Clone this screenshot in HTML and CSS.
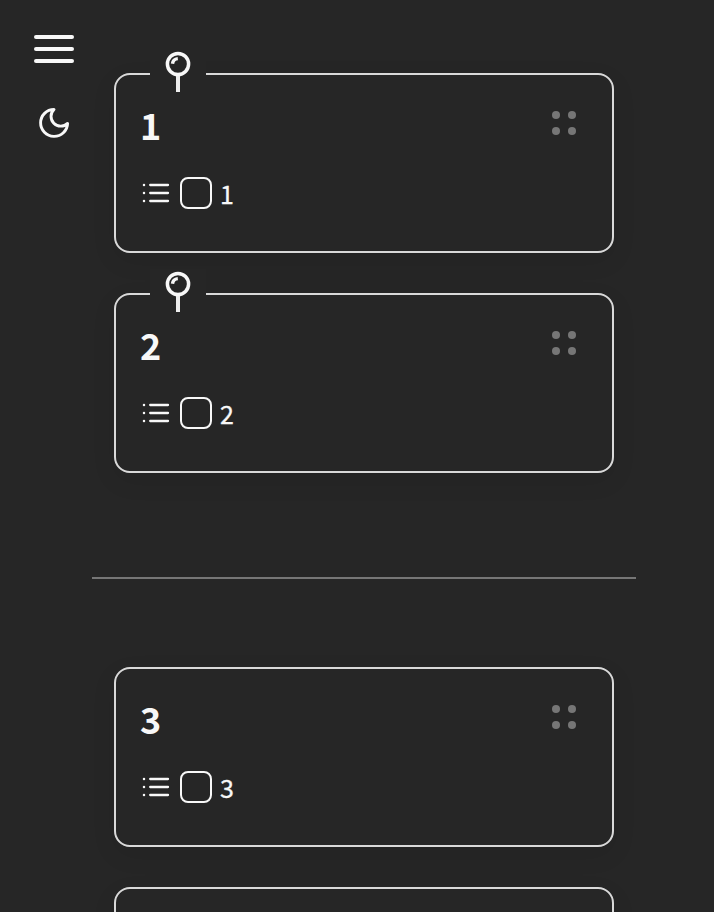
FILE: index.html
```
<!DOCTYPE html>
<html lang="en">
<head>
<meta charset="utf-8">
<title>Notes</title>
<link rel="stylesheet" href="styles.css">
</head>
<body>
<svg class="symbols" aria-hidden="true">
  <symbol id="pin" viewBox="0 0 28 44">
    <path d="M14 25V42" stroke="#ededed" stroke-width="4" fill="none"/>
    <circle cx="14" cy="14" r="10.6" stroke="#f8f8f8" stroke-width="3.5" fill="none"/>
    <path d="M8.5 13.7Q9 9.1 13.8 8.6" stroke="#f8f8f8" stroke-width="3.4" fill="none"/>
  </symbol>
  <symbol id="list" viewBox="0 0 28 22">
    <path d="M8.2 3H26M8.2 11H26M8.2 19H26" stroke="#f8f8f8" stroke-width="2.3" stroke-linecap="round"/>
    <path d="M2 3H2.01M2 11H2.01M2 19H2.01" stroke="#f8f8f8" stroke-width="2.5" stroke-linecap="round"/>
  </symbol>
</svg>
<div class="page">
  <nav class="rail">
    <div class="menu"><span></span><span></span><span></span></div>
    <svg class="moon" viewBox="0 0 32 32"><path d="M16 2.4A13.5 13.5 0 1 0 29.6 16.4A9.4 9.4 0 0 1 16 2.4Z"/></svg>
  </nav>
  <main class="notes">
    <section class="group">
      <article class="card">
        <div class="pin"><svg><use href="#pin"/></svg></div>
        <header class="head"><h2>1</h2><div class="grip"><i></i><i></i><i></i><i></i></div></header>
        <div class="task"><svg class="list"><use href="#list"/></svg><span class="box"></span><span class="label">1</span></div>
      </article>
      <article class="card">
        <div class="pin"><svg><use href="#pin"/></svg></div>
        <header class="head"><h2>2</h2><div class="grip"><i></i><i></i><i></i><i></i></div></header>
        <div class="task"><svg class="list"><use href="#list"/></svg><span class="box"></span><span class="label">2</span></div>
      </article>
    </section>
    <hr class="divider">
    <section class="group">
      <article class="card">
        <header class="head"><h2>3</h2><div class="grip"><i></i><i></i><i></i><i></i></div></header>
        <div class="task"><svg class="list"><use href="#list"/></svg><span class="box"></span><span class="label">3</span></div>
      </article>
      <article class="card"></article>
    </section>
  </main>
</div>
</body>
</html>
```
FILE: styles.css
```
* { box-sizing: border-box; }
body {
  margin: 0;
  background: #262626;
  color: #f8f8f8;
  font-family: "Noto Sans CJK SC", "Noto Sans", sans-serif;
}
.symbols { position: absolute; width: 0; height: 0; }
.page { display: flex; height: 912px; overflow: hidden; }
.rail {
  width: 92px;
  padding: 35px 0 0 34px;
}
.menu { display: flex; flex-direction: column; gap: 8px; width: 40px; }
.menu span { height: 4px; border-radius: 2px; background: #f8f8f8; }
.moon {
  display: block;
  width: 32px;
  height: 32px;
  margin: 44px 0 0 4px;
  fill: none;
  stroke: #f8f8f8;
  stroke-width: 2.9;
  stroke-linejoin: round;
}
.notes { width: 544px; padding-top: 73px; }
.group { display: grid; gap: 40px; padding: 0 22px; }
.card {
  position: relative;
  height: 180px;
  padding: 24px 36px 0 24px;
  border: 2px solid #d9d9d9;
  border-radius: 16px;
  box-shadow: 0 8px 24px rgba(0, 0, 0, 0.08);
}
.pin {
  position: absolute;
  left: 34px;
  top: -26px;
  width: 56px;
  height: 46px;
  background: #262626;
}
.pin svg { display: block; width: 28px; height: 44px; margin: 1px 0 0 14px; }
.head { display: flex; justify-content: space-between; height: 50px; }
.head h2 {
  margin: 0;
  font-size: 36px;
  line-height: 50px;
  font-weight: 700;
}
.grip {
  display: grid;
  grid-template-columns: 8px 8px;
  grid-auto-rows: 8px;
  gap: 8px;
  margin-top: 12px;
}
.grip i { border-radius: 50%; background: #767676; }
.task { display: flex; align-items: center; height: 32px; margin-top: 28px; }
.list { width: 28px; height: 22px; margin-left: 2px; }
.box {
  width: 32px;
  height: 32px;
  margin-left: 10px;
  border: 2px solid #f8f8f8;
  border-radius: 8px;
}
.label {
  margin-left: 8px;
  font-size: 25px;
  line-height: 32px;
  -webkit-text-stroke: 0.3px #f8f8f8;
}
.divider {
  height: 2px;
  margin: 104px 0 88px;
  border: 0;
  background: #767676;
}
```
